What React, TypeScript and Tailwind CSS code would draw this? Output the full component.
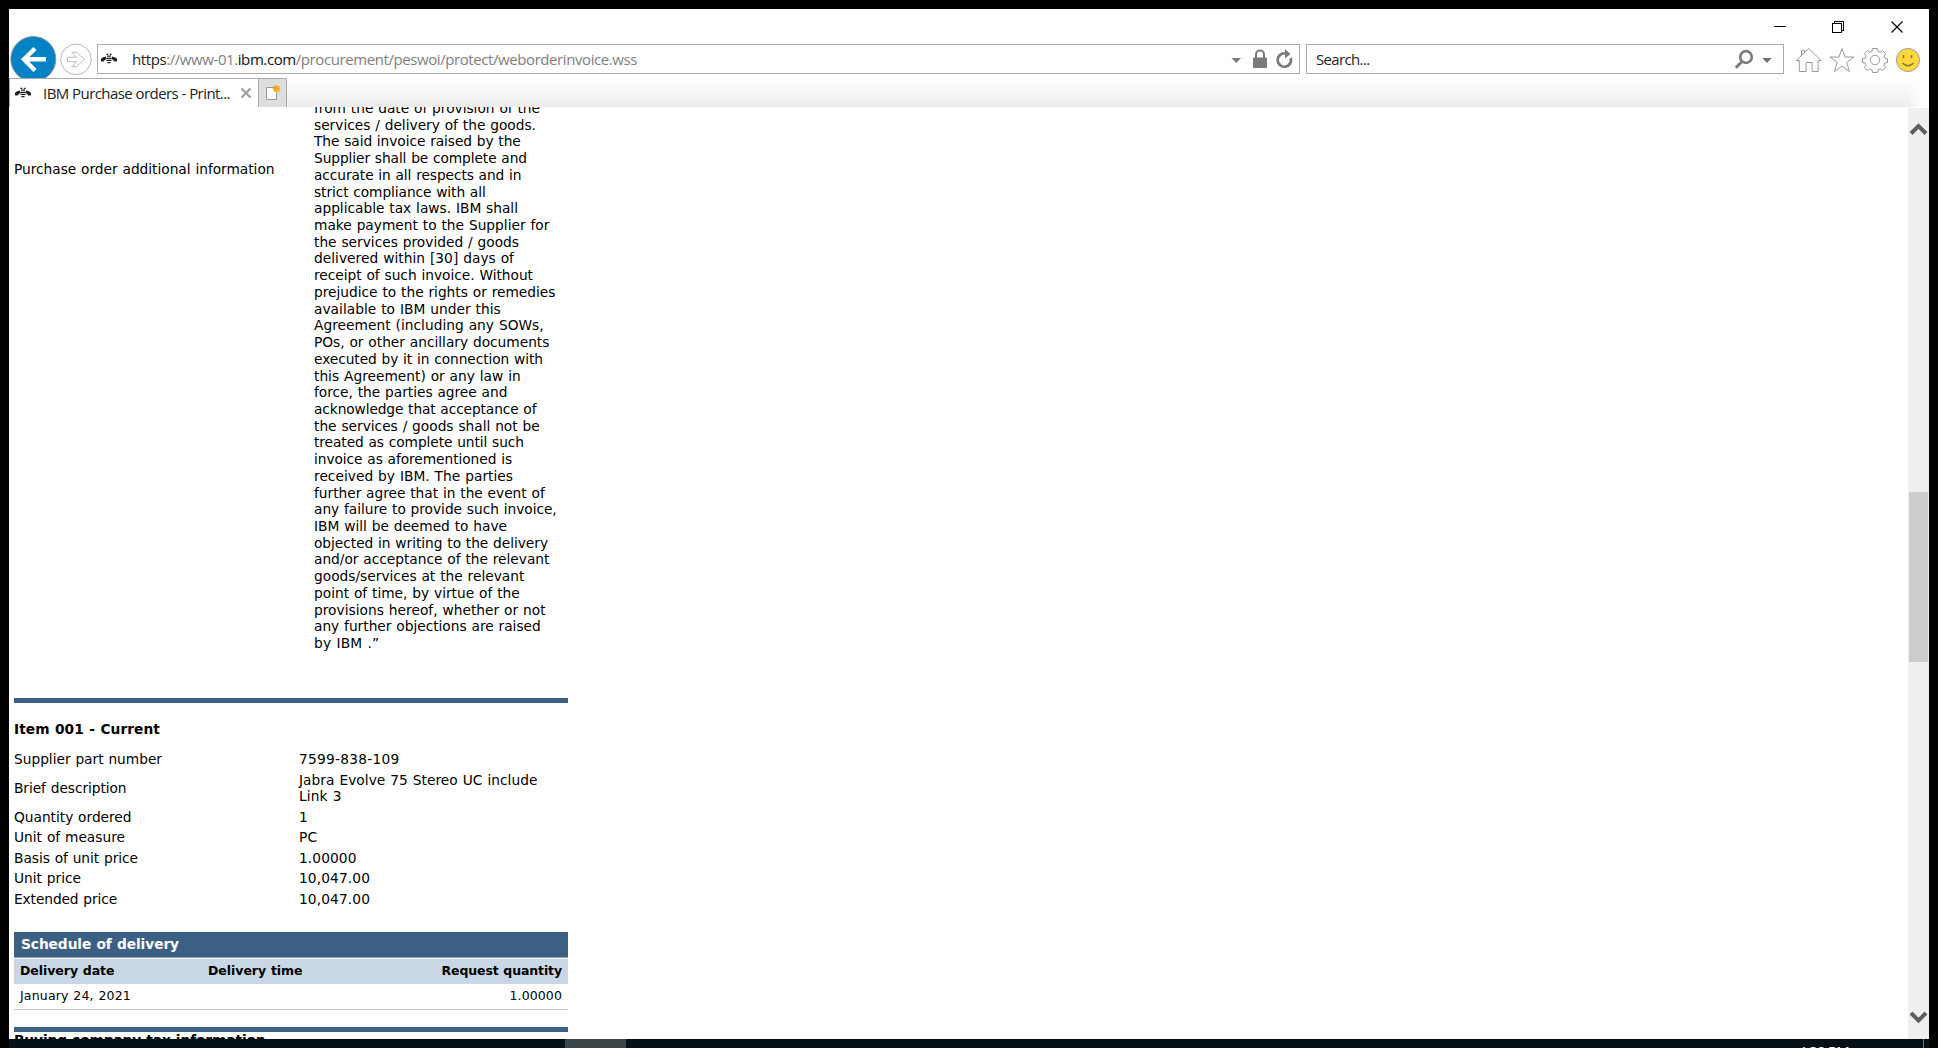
import React, { useLayoutEffect, useRef } from "react";

/** A single text run whose letter spacing is tuned so that it spans w pixels. */
function Fit({ w, className = "", children }: { w: number; className?: string; children: React.ReactNode }) {
  const ref = useRef<HTMLSpanElement>(null);
  useLayoutEffect(() => {
    const el = ref.current;
    if (!el) return;
    el.style.letterSpacing = "0px";
    const n = (el.textContent || "").length;
    const natural = el.getBoundingClientRect().width;
    if (n > 1) el.style.letterSpacing = `${(w - natural) / n}px`;
  }, [w]);
  return (
    <span ref={ref} className={`inline-block whitespace-pre ${className}`}>
      {children}
    </span>
  );
}

const terms: [string, number][] = [
  ["from the date of provision of the", 225.3],
  ["services / delivery of the goods.", 221.3],
  ["The said invoice raised by the", 206],
  ["Supplier shall be complete and", 212.3],
  ["accurate in all respects and in", 206.7],
  ["strict compliance with all", 171],
  ["applicable tax laws. IBM shall", 203.3],
  ["make payment to the Supplier for", 234.7],
  ["the services provided / goods", 204.3],
  ["delivered within [30] days of", 199.3],
  ["receipt of such invoice. Without", 218.3],
  ["prejudice to the rights or remedies", 240.7],
  ["available to IBM under this", 186],
  ["Agreement (including any SOWs,", 229],
  ["POs, or other ancillary documents", 234.7],
  ["executed by it in connection with", 228.3],
  ["this Agreement) or any law in", 206],
  ["force, the parties agree and", 192.7],
  ["acknowledge that acceptance of", 221.7],
  ["the services / goods shall not be", 225],
  ["treated as complete until such", 209.3],
  ["invoice as aforementioned is", 197.3],
  ["received by IBM. The parties", 198.3],
  ["further agree that in the event of", 230],
  ["any failure to provide such invoice,", 242],
  ["IBM will be deemed to have", 192.3],
  ["objected in writing to the delivery", 233.3],
  ["and/or acceptance of the relevant", 234.7],
  ["goods/services at the relevant", 209.7],
  ["point of time, by virtue of the", 205],
  ["provisions hereof, whether or not", 231],
  ["any further objections are raised", 226],
  ["by IBM .”", 64.7],
];

const rows: { label: string; lw: number; values: [string, number][] }[] = [
  { label: "Supplier part number", lw: 148, values: [["7599-838-109", 100.5]] },
  { label: "Brief description", lw: 112.5, values: [["Jabra Evolve 75 Stereo UC include", 238.5], ["Link 3", 42.5]] },
  { label: "Quantity ordered", lw: 117.5, values: [["1", 9]] },
  { label: "Unit of measure", lw: 111, values: [["PC", 18.5]] },
  { label: "Basis of unit price", lw: 124, values: [["1.00000", 57.5]] },
  { label: "Unit price", lw: 67, values: [["10,047.00", 71]] },
  { label: "Extended price", lw: 103, values: [["10,047.00", 71]] },
];

function Bee() {
  return (
    <svg width="16" height="12" viewBox="0 0 16 12" fill="#222" className="shrink-0">
      <path d="M0 8V5.800L2.200 4.200 5 3.600v2.600L3.600 7.200 2.600 8.600H.6zM16 8V5.800l-2.200-1.600-2.800-.6v2.600l1.400 1 1 1.400h2z" />
      <path d="M5.400 0.800h1.800v1.200H5.400zM8.800 0.800h1.800v1.200H8.800zM6 2.600h4v1.200H6zM5.200 4.700h5.600v1.200H5.200zM5.400 6.800h5.200V8H5.400zM6.400 9h3.200v1.200H6.400z" />
    </svg>
  );
}

function TitleBar() {
  return (
    <div className="flex h-[34px] shrink-0 items-start justify-end pt-[12px] pr-[26px]">
      <svg width="130" height="13" viewBox="0 0 130 13" fill="none" stroke="#000" shapeRendering="crispEdges">
        <path d="M1 5.500h12" />
        <path d="M59.500 2.500h9v9h-9zM61.500 2V.5h9v9H69" />
        <path d="M118.500 .5l11 11M129.500 .5l-11 11" shapeRendering="auto" strokeWidth="1.100" />
      </svg>
    </div>
  );
}

function Toolbar() {
  return (
    <div className="flex h-[35px] shrink-0 items-start">
      <svg width="88" height="43" viewBox="9 35 88 43" className="-mt-[8px] shrink-0">
        <circle cx="33.300" cy="59" r="22.500" fill="#0482c6" stroke="#8d9296" />
        <path d="M35 48.500 24 59.300l11 11.200M24 59.300h22" fill="none" stroke="#fff" strokeWidth="4.400" />
        <circle cx="76" cy="59.300" r="15.300" fill="#fff" stroke="#b9b9b9" />
        <path d="M67.500 57.200h9l-4.600-5h4.200l8.600 7.200-8.600 7.300h-4.200l4.600-5h-9z" fill="none" stroke="#bcbcbc" />
      </svg>
      <div className="mt-[1px] flex h-[30px] w-[1203px] shrink-0 items-center border border-[#ababab] pl-[3px]">
        <Bee />
        <Fit w={505} className="ml-[15px] text-[15px] text-[#808080]">
          <span className="text-[#222]">https</span>://www-01.<span className="text-[#111]">ibm.com</span>/procurement/peswoi/protect/weborderinvoice.wss
        </Fit>
        <svg width="64" height="28" viewBox="1230 45 64 28" className="mr-[5px] ml-auto shrink-0" fill="#7b7b7b">
          <path d="M1231.500 58h9.500l-4.700 5z" />
          <rect x="1253" y="57.500" width="14" height="10.500" rx="1" />
          <path d="M1256 58v-3.500a4 4 0 0 1 8 0V58" fill="none" stroke="#7b7b7b" strokeWidth="2" />
          <path d="M1285 53.400A6.700 6.700 0 1 0 1290.700 58" fill="none" stroke="#7b7b7b" strokeWidth="2.800" />
          <path d="M1285 49l5.500 5-5.500 4.500z" />
        </svg>
      </div>
      <div className="mt-[1px] ml-[6px] flex h-[30px] w-[478px] shrink-0 items-center border border-[#ababab] pl-[9px]">
        <Fit w={53.500} className="text-[15px] text-[#222]">Search...</Fit>
        <svg width="50" height="28" viewBox="1732 45 50 28" className="mr-px ml-auto shrink-0" fill="#6f6f6f">
          <circle cx="1746" cy="57" r="5.800" fill="none" stroke="#7b7b7b" strokeWidth="2.700" />
          <path d="M1742.300 61.200l-6.500 6.600" stroke="#7b7b7b" strokeWidth="3" />
          <path d="M1762.300 58h9.400l-4.700 5z" />
        </svg>
      </div>
      <svg width="130" height="30" viewBox="1793 45 130 30" className="mt-[2px] ml-[9px] shrink-0" fill="none" stroke="#9a9a9a">
        <path d="M1796.500 60.500l12.300-12 12.300 12h-3v11h-6v-9h-6v9h-6.800v-11zM1801.500 55.500v-5h3v2" />
        <path d="M1842 48.500l3 8.500h9l-7.200 5.500 2.700 9-7.500-5.300-7.500 5.300 2.700-9-7.200-5.500h9z" />
        <circle cx="1875" cy="60" r="4.700" />
        <path d="M1872.500 48.500h5l.6 3 2 .8 2.600-1.700 3 3-1.700 2.600.8 2 2.700.5v3.800l-2.700.5-.8 2 1.700 2.600-3 3-2.600-1.700-2 .8-.6 2.800h-5l-.6-2.800-2-.8-2.600 1.700-3-3 1.700-2.600-.8-2-2.700-.5v-3.800l2.700-.5.8-2-1.700-2.600 3-3 2.600 1.700 2-.8z" />
        <circle cx="1908" cy="60" r="11.500" fill="#ffd83d" />
        <path d="M1903.500 55v3M1911.500 55v3" stroke="#8a7434" strokeWidth="1.600" />
        <path d="M1902.500 63q5.500 5.500 11 0" stroke="#8a7434" strokeWidth="1.500" />
      </svg>
    </div>
  );
}

function TabStrip() {
  return (
    <div className="flex h-[29px] shrink-0">
      <div className="flex h-full w-[249px] shrink-0 items-center border-t border-l border-[#ababab] bg-white pl-[5px]">
        <Bee />
        <Fit w={187} className="ml-[12px] text-[15px] text-[#222]">IBM Purchase orders - Print...</Fit>
        <svg width="12" height="12" viewBox="0 0 12 12" className="ml-[10px]" stroke="#a0a0a0" strokeWidth="2.300">
          <path d="M1.500 1.500l9 9M10.500 1.500l-9 9" />
        </svg>
      </div>
      <div className="h-full w-[29px] shrink-0 border border-b-0 border-[#ababab] bg-[#dedede]">
        <svg width="27" height="28" viewBox="0 0 27 28">
          <path d="M7.500 8.500h10v12h-10z" fill="#fafafa" stroke="#999" />
          <path d="M17.500 6v7.500M13.700 9.700h7.600M14.900 7l5.400 5.400M20.300 7l-5.400 5.400" stroke="#f5a81c" strokeWidth="1.500" />
        </svg>
      </div>
      <div className="flex grow justify-end bg-linear-to-b from-white via-[#f6f6f6] to-[#ececec]">
        <div className="h-full w-[22px] bg-linear-to-r from-white/0 to-white to-70%" />
      </div>
    </div>
  );
}

function Clause() {
  return (
    <div className="flex h-[599px] shrink-0 overflow-hidden">
      <div className="w-[300px] shrink-0 pt-[54px]">
        <Fit w={260.500}>Purchase order additional information</Fit>
      </div>
      <div className="-mt-[7px]">
        {terms.map(([t, w]) => (
          <div key={t} className="h-[16.720px]">
            <Fit w={w + 0.700}>{t}</Fit>
          </div>
        ))}
      </div>
    </div>
  );
}

function Page() {
  return (
    <div className="h-full w-[568px] overflow-hidden pl-[5px] font-['DejaVu_Sans',sans-serif] text-[13.750px] leading-[16.720px] [word-spacing:0.5px] text-black">
      <Clause />
      <div className="-mt-[8px] h-[5px] w-[554px] bg-[#3c6083]" />
      <div className="mt-[18px] h-[30px] font-bold">
        <Fit w={146}>Item 001 - Current</Fit>
      </div>
      <div className="w-[554px]">
        {rows.map((r) => (
          <div key={r.label} className="flex items-center pb-[3.800px]">
            <div className="w-[285px] shrink-0"><Fit w={r.lw}>{r.label}</Fit></div>
            <div>
              {r.values.map(([v, w]) => (
                <div key={v} className="h-[16.720px]"><Fit w={w}>{v}</Fit></div>
              ))}
            </div>
          </div>
        ))}
      </div>
      <div className="mt-[21px] w-[554px]">
        <div className="flex h-[26px] items-center border-b border-[#8ba0b5] bg-[#3c6083] pl-[7px] font-bold text-white">
          <Fit w={158}>Schedule of delivery</Fit>
        </div>
        <div className="mt-px flex h-[25px] items-center bg-[#c9d6e4] px-[6px] text-[12.500px] font-bold">
          <div className="w-[188px]"><Fit w={94.500}>Delivery date</Fit></div>
          <Fit w={94.500}>Delivery time</Fit>
          <Fit w={120.500} className="ml-auto">Request quantity</Fit>
        </div>
        <div className="flex h-[26px] items-center justify-between border-b border-[#c8c8c8] px-[6px] text-[12.500px]">
          <Fit w={111}>January 24, 2021</Fit>
          <Fit w={52.500}>1.00000</Fit>
        </div>
      </div>
      <div className="mt-[17px] h-[5px] w-[554px] bg-[#3c6083]" />
      <div className="font-bold"><Fit w={251.500}>Buying company tax information</Fit></div>
    </div>
  );
}

function Scrollbar() {
  return (
    <div className="mt-px flex w-[21px] shrink-0 flex-col items-center bg-[#efefef]">
      <svg width="21" height="30" viewBox="0 0 21 30" fill="none" stroke="#5f5f5f" strokeWidth="4">
        <path d="M3 25.500l7.500-7.500 7.500 7.500" />
      </svg>
      <div className="mt-[354px] h-[170px] w-[19px] shrink-0 bg-[#cdcdcd]" />
      <svg width="21" height="30" viewBox="0 0 21 30" fill="none" stroke="#5f5f5f" strokeWidth="4" className="mt-auto">
        <path d="M3 4l7.500 7.500 7.500-7.500" />
      </svg>
    </div>
  );
}

export default function App() {
  return (
    <div className="flex h-[1048px] w-[1938px] flex-col overflow-hidden bg-black pt-[9px] font-['Open_Sans',sans-serif]">
      <div className="mx-[9px] flex h-[1030px] w-[1920px] shrink-0 flex-col overflow-hidden bg-white">
        <TitleBar />
        <Toolbar />
        <TabStrip />
        <div className="flex min-h-0 grow justify-between">
          <Page />
          <Scrollbar />
        </div>
      </div>
      <div className="mx-[9px] flex h-[9px] w-[1920px] shrink-0 overflow-hidden bg-[#051117]">
        <div className="ml-[556px] w-[61px] shrink-0 bg-[#3c4548]" />
        <div className="ml-[1172px] pt-[3px] text-[15px] leading-[18px] whitespace-nowrap text-white">
          <Fit w={51}>4:20 PM</Fit>
        </div>
        <div className="mr-[5px] ml-auto w-px bg-[#69757a]" />
      </div>
    </div>
  );
}
